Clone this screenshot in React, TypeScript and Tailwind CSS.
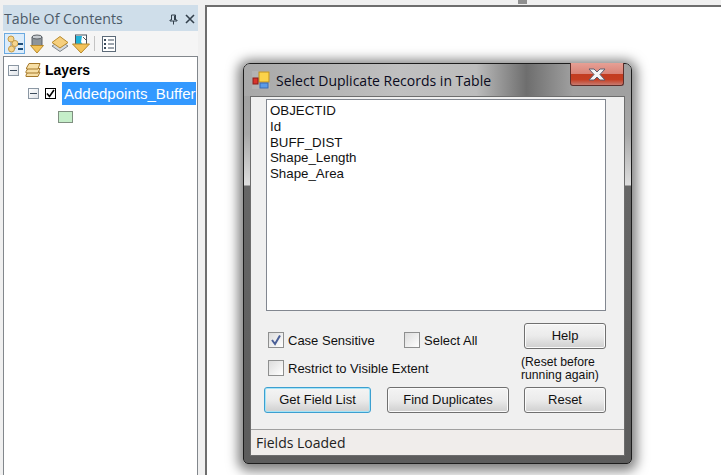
import React from 'react';

const FIELDS = ['OBJECTID', 'Id', 'BUFF_DIST', 'Shape_Length', 'Shape_Area'];

const MinusBox: React.FC = () => (
    <div className="w-[11px] h-[11px] shrink-0 border border-[#8b97a3] bg-gradient-to-br from-white to-[#dfe3e8] flex items-center justify-center">
        <div className="w-[7px] h-px bg-[#3c4c5c]" />
    </div>
);

const DrawOrderIcon = () => (
    <svg width="18" height="18" viewBox="0 0 18 18">
        <path d="M5 4 L5 13 L10 13" stroke="#8a8a8a" fill="none" />
        <circle cx="5" cy="4" r="3" fill="#f6d58e" stroke="#c49a45" />
        <circle cx="9" cy="8.5" r="3" fill="#f6d58e" stroke="#c49a45" />
        <circle cx="5.5" cy="14" r="3" fill="#f6d58e" stroke="#c49a45" />
        <path d="M12 9 h5 M12 14 h5" stroke="#1f4e79" strokeWidth="2" />
    </svg>
);

const SourceIcon = () => (
    <svg width="14" height="20" viewBox="0 0 14 20">
        <path d="M2 3 V12 H12 V3 Z" fill="#8d9499" stroke="#5a6066" />
        <ellipse cx="7" cy="3" rx="5" ry="2" fill="#c8cdd2" stroke="#5a6066" />
        <path d="M0.5 11.5 H13.5 L7 19 Z" fill="#f3c35a" stroke="#b88a2c" />
    </svg>
);

const VisibilityIcon = () => (
    <svg width="18" height="18" viewBox="0 0 18 18">
        <path d="M1 11 L9 6 L17 11 L9 16.5 Z" fill="#d4d8dc" stroke="#80868c" />
        <path d="M1 7.5 L9 1.5 L17 7.5 L9 13 Z" fill="#f6cf7d" stroke="#b88a2c" />
    </svg>
);

const SelectionIcon = () => (
    <svg width="18" height="20" viewBox="0 0 18 20">
        <rect x="3.5" y="1" width="11" height="11" fill="#fff" stroke="#4a5560" />
        <path d="M4 2 H10 L9 8 L12 12 H4 Z" fill="#1fb2d8" />
        <path d="M11 3 l3 3" stroke="#555" />
        <path d="M0.5 10 H17.5 L9 19 Z" fill="#f3c35a" stroke="#b88a2c" />
    </svg>
);

const OptionsIcon = () => (
    <svg width="14" height="16" viewBox="0 0 14 16">
        <rect x="0.5" y="0.5" width="13" height="15" fill="#fff" stroke="#5c6a78" />
        <path d="M6 4 H12 M6 8 H12 M6 12 H12" stroke="#3c4c5c" />
        <rect x="2" y="3" width="2" height="2" fill="#3c4c5c" />
        <rect x="2" y="7" width="2" height="2" fill="#3c4c5c" />
        <rect x="2" y="11" width="2" height="2" fill="#3c4c5c" />
    </svg>
);

const LayersIcon = () => (
    <svg width="16" height="16" viewBox="0 0 16 16">
        <path d="M1 13 L3 10 H15 L13 14.5 H1 Z" fill="#f7dfa6" stroke="#a5782a" />
        <path d="M1 9.5 L3 6.5 H15 L13 11 H1 Z" fill="#f7dfa6" stroke="#a5782a" />
        <path d="M1.5 6 L4 1.5 H15 L13 7 H1.5 Z" fill="#f7dfa6" stroke="#a5782a" />
    </svg>
);

const AppIcon = () => (
    <svg width="18" height="18" viewBox="0 0 18 18">
        <rect width="18" height="18" fill="#b9b9b9" opacity="0.6" />
        <rect x="7" y="1" width="10" height="10" fill="#fbd34a" stroke="#c0901c" />
        <rect x="1" y="7" width="5" height="6" fill="#d8342c" stroke="#8c1c18" />
        <rect x="8" y="12" width="8" height="5" fill="#5b9be8" stroke="#3a6ab0" />
    </svg>
);

const WinCheck: React.FC<{ checked?: boolean; label: string }> = ({ checked, label }) => (
    <div className="flex items-center gap-1">
        <div className="w-4 h-4 shrink-0 border border-[#8e8f8f] bg-gradient-to-br from-[#dcdcdc] to-white p-px flex items-center justify-center">
            {checked && (
                <svg width="12" height="12" viewBox="0 0 12 12">
                    <path d="M2 6 L5 10 L10 1.5" fill="none" stroke="#4a5f97" strokeWidth="2" />
                </svg>
            )}
        </div>
        <span className="whitespace-nowrap">{label}</span>
    </div>
);

const WinButton: React.FC<{ label: string; className: string; focused?: boolean }> = ({ label, className, focused }) => (
    <button
        className={
            'h-[26px] pb-px rounded-[3px] border bg-gradient-to-b from-[#f4f4f4] via-[#ebebeb] to-[#cfcfcf] text-[#111] ' +
            className + ' ' +
            (focused ? 'border-[#3c9fd0] shadow-[inset_0_0_0_1px_#a5e4f7]' : 'border-[#707070] shadow-[inset_0_0_0_1px_#fbfbfb]')
        }
    >
        {label}
    </button>
);

export default function App() {
    return (
        <div className="relative w-[721px] h-[475px] overflow-hidden bg-[#f0f0f0] flex font-['Liberation_Sans',sans-serif]">
            {/* table of contents */}
            <div className="w-[198px] shrink-0 pt-[5px] pl-[3px] flex flex-col">
                <div className="h-[26px] shrink-0 bg-[#cfdeea] flex items-center pt-[2px] pl-px pr-[3px] font-['Open_Sans',sans-serif] text-[14.2px] text-[#4c5a68]">
                    <span className="flex-1">Table Of Contents</span>
                    <svg width="9" height="11" viewBox="0 0 9 11" className="mr-[7px]">
                        <path d="M2.5 1 H6.5 V6 H8 V7 H1 V6 H2.5 Z M4.5 7 V10.5 M5.5 1.5 V6" stroke="#33404c" fill="none" />
                    </svg>
                    <svg width="10" height="10" viewBox="0 0 10 10">
                        <path d="M1 1 L9 9 M9 1 L1 9" stroke="#33404c" strokeWidth="1.6" />
                    </svg>
                </div>
                <div className="h-[25px] shrink-0 bg-[#f5f5f5] flex items-center pl-px">
                    <div className="w-[21px] h-[21px] border border-[#6aa9e0] bg-[#dcecfa] flex items-center justify-center">
                        <DrawOrderIcon />
                    </div>
                    <div className="ml-[5px]"><SourceIcon /></div>
                    <div className="ml-[7px]"><VisibilityIcon /></div>
                    <div className="ml-[3px]"><SelectionIcon /></div>
                    <div className="w-px h-[15px] bg-[#c4c4c4] ml-[4px]" />
                    <div className="ml-[7px]"><OptionsIcon /></div>
                </div>
                <div className="flex-1 bg-white border border-[#82878c] border-b-0 text-[#000]">
                    <div className="flex items-center h-[24px] mt-px pl-1">
                        <MinusBox />
                        <div className="ml-[6px]"><LayersIcon /></div>
                        <span className="font-bold text-[14px] ml-[4px]">Layers</span>
                    </div>
                    <div className="flex items-center h-[23px] pl-[24px]">
                        <MinusBox />
                        <div className="ml-[6px] w-[11px] h-[11px] shrink-0 border border-black flex items-center justify-center">
                            <svg width="9" height="9" viewBox="0 0 9 9">
                                <path d="M1 4.5 L3.5 7.5 L8 1" fill="none" stroke="#000" strokeWidth="1.6" />
                            </svg>
                        </div>
                        <div className="ml-[6px] w-[134px] h-[23px] bg-[#3399ff] text-white text-[15px] leading-[23px] pl-[2px] overflow-hidden whitespace-nowrap">
                            Addedpoints_Buffer
                        </div>
                    </div>
                    <div className="w-[15px] h-[12px] ml-[54px] mt-[6px] bg-[#c5eec9] border border-[#7f8f80]" />
                </div>
            </div>

            {/* map area */}
            <div className="flex-1 ml-[7px] mt-[5px] bg-white border-l-2 border-t-2 border-[#6e6e6e]" />
            <div className="absolute left-[518px] top-0 w-[9px] h-[4px] bg-[#8f8f8f]" />

            {/* dialog */}
            <div className="absolute left-[243px] top-[63px] w-[389px] h-[401px] rounded-t-[7px] rounded-b-[5px] border border-[#1d1d1d] bg-[linear-gradient(180deg,#9a9a9a_0px,#a8a8a8_70px,#dedede_121px,#666666_122px,#5c5c5c_100%)] shadow-[0_2px_12px_5px_rgba(0,0,0,0.5)] flex flex-col px-[6px] pb-[7px]">
                <div className="relative h-[32px] shrink-0 flex items-center gap-[6px] pl-[8px] mx-[-6px] bg-[linear-gradient(90deg,#a8a8a8_0%,#c0c0c0_40%,#bcbcbc_60%,#6e6e6e_73%,#a0a0a0_85%)] rounded-t-[6px]">
                    <AppIcon />
                    <span className="text-[14px] font-['Open_Sans',sans-serif] text-[#0a0a20] whitespace-nowrap">Select Duplicate Records in Table</span>
                    <div className="absolute right-[7px] top-[-1px] w-[54px] h-[23px] rounded-b-[3px] border border-[#5e2e2a] border-t-0 bg-[linear-gradient(180deg,#e6a095_0%,#d98478_48%,#c23c20_52%,#c53e22_75%,#c77a70_100%)] flex items-center justify-center">
                        <svg width="20" height="13" viewBox="0 0 20 13">
                            <path d="M2 1 H7 L10 4 L13 1 H18 L13 6.5 L18 12 H13 L10 9 L7 12 H2 L7 6.5 Z" fill="#f4f4f4" stroke="#5a5f70" />
                        </svg>
                    </div>
                </div>
                <div className="flex-1 min-h-0 bg-[#f0f0f0] border border-[#6d6d6d] flex flex-col text-[13px] leading-none text-[#111]">
                    <div className="flex-1 pl-[15px] pr-[18px] pt-[2px] flex flex-col">
                        <div className="h-[212px] shrink-0 bg-white border border-[#828790] px-[3px] pt-[3px] text-[13.3px] leading-[15.8px]">
                            {FIELDS.map((f) => (
                                <div key={f}>{f}</div>
                            ))}
                        </div>
                        <div className="flex mt-[12px] h-[59px]">
                            <div className="w-[258px] pl-[2px] pt-[9px] shrink-0 flex flex-col gap-[12px]">
                                <div className="flex">
                                    <div className="w-[136px]"><WinCheck checked label="Case Sensitive" /></div>
                                    <WinCheck label="Select All" />
                                </div>
                                <WinCheck label="Restrict to Visible Extent" />
                            </div>
                            <div className="flex flex-col">
                                <WinButton label="Help" className="w-[82px] shrink-0" />
                                <div className="mt-[7px] ml-[-3px] text-[12.2px] leading-[13px] whitespace-nowrap">(Reset before<br />running again)</div>
                            </div>
                        </div>
                        <div className="flex mt-[5px] ml-[-2px] gap-[16px]">
                            <WinButton label="Get Field List" className="w-[107px]" focused />
                            <WinButton label="Find Duplicates" className="w-[122px]" />
                            <WinButton label="Reset" className="w-[82px] ml-[-1px]" />
                        </div>
                    </div>
                    <div className="h-[26px] shrink-0 border-t border-[#a0a0a0] bg-[#f0edeb] flex items-center pl-[5px] font-['Open_Sans',sans-serif] text-[14px] text-[#222]">
                        Fields Loaded
                    </div>
                </div>
            </div>
        </div>
    );
}
